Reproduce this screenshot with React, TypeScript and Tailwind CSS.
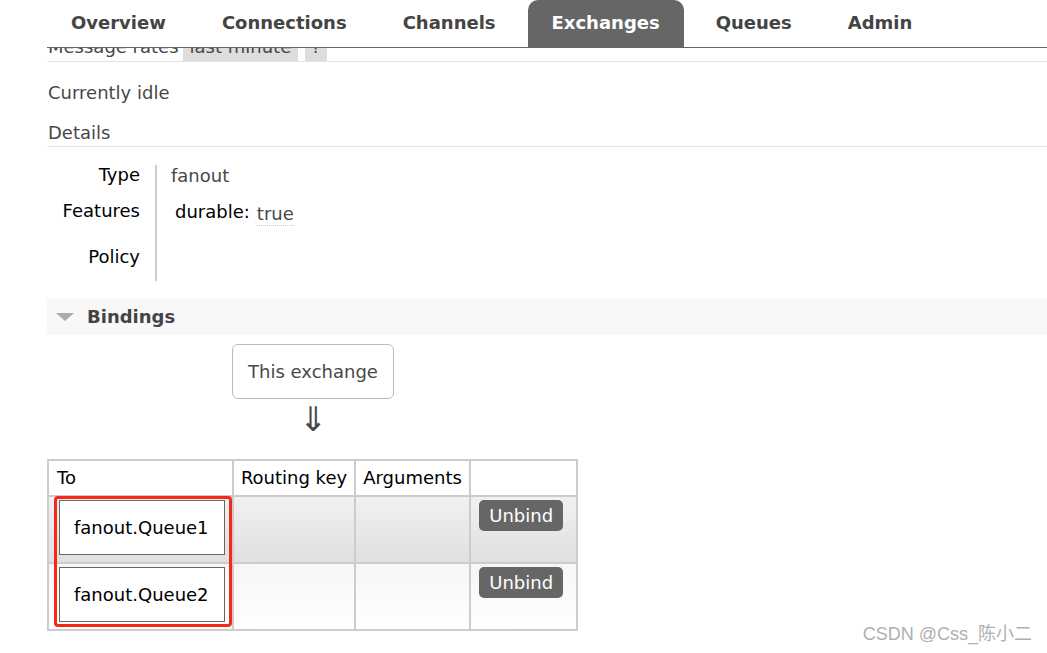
import React from "react";

const font = { fontFamily: '"DejaVu Sans", Verdana, sans-serif' };

export default function App() {
  const tabs = ["Overview", "Connections", "Channels", "Exchanges", "Queues", "Admin"];
  return (
    <div className="w-[1047px] h-[653px] bg-white overflow-hidden relative text-[#484848] text-[18px] leading-[22px]" style={font}>
      {/* nav */}
      <div className="relative z-10 bg-white h-[48px] ml-[47px] border-b border-[#666] flex items-end">
        <div className="flex h-[47px] gap-[8px]">
          {tabs.map((t) => (
            <div
              key={t}
              className={
                "h-[47px] px-[24px] flex items-center pb-[1px] text-[18px] font-bold " +
                (t === "Exchanges" ? "bg-[#666] text-white rounded-t-[10px]" : "text-[#444]")
              }
            >
              {t}
            </div>
          ))}
        </div>
      </div>

      {/* message rates row, scrolled under nav */}
      <div className="ml-[47px] -mt-[14px] h-[28px] border-b border-[#e4e4e4] flex items-start gap-[4px] text-[#484848]">
        <span className="pt-[2px] pl-[1px]">Message rates</span>
        <span className="bg-[#ddd] px-[7px] pt-[2px] h-[27px]">last minute</span>
        <span className="bg-[#ddd] px-[6px] pt-[2px] h-[27px] ml-[3px]">?</span>
      </div>

      <div className="ml-[48px] mt-[20px]">Currently idle</div>
      <div className="ml-[47px] mt-[18px] pl-[1px] pb-[2px] border-b border-[#e4e4e4]">Details</div>

      {/* details table */}
      <div className="ml-[47px] mt-[18px] flex">
        <div className="w-[93px] -mt-[1px] text-right text-black flex flex-col">
          <div className="h-[36px]">Type</div>
          <div className="h-[46px]">Features</div>
          <div className="h-[35px]">Policy</div>
        </div>
        <div className="w-[2px] h-[116px] bg-[#ccc] ml-[15px]" />
        <div className="ml-[14px] flex flex-col">
          <div className="h-[36px]">fanout</div>
          <div className="flex items-start ml-[4px]">
            <span className="text-black">durable:</span>
            <span className="ml-[7px] mt-[2px] border-b border-dotted border-[#ccc]">true</span>
          </div>
        </div>
      </div>

      {/* bindings header */}
      <div className="ml-[47px] mt-[18px] h-[36px] bg-[#f8f8f8] flex items-center">
        <svg width="18" height="8" viewBox="0 0 18 8" className="ml-[9px]">
          <polygon points="0,0 18,0 9,8" fill="#aaa" />
        </svg>
        <span className="ml-[13px] font-bold text-[#444]">Bindings</span>
      </div>

      <div className="ml-[232px] mt-[9px] w-[162px] h-[55px] border border-[#bbb] rounded-[6px] flex items-center justify-center">
        This exchange
      </div>
      <div className="ml-[232px] w-[162px] h-[60px] text-center text-[34px] leading-[40px] text-[#484848]">⇓</div>

      {/* bindings table */}
      <div className="ml-[47px] w-[531px] relative">
        <table className="border-collapse text-black">
          <thead>
            <tr className="h-[36px]">
              <th className="border-2 border-[#ccc] w-[185px] text-left font-normal px-[8px]">To</th>
              <th className="border-2 border-[#ccc] w-[123px] text-left font-normal px-[7px]">Routing key</th>
              <th className="border-2 border-[#ccc] w-[115px] text-left font-normal px-[7px]">Arguments</th>
              <th className="border-2 border-[#ccc] w-[107px]"></th>
            </tr>
          </thead>
          <tbody>
            {["fanout.Queue1", "fanout.Queue2"].map((q, i) => (
              <tr
                key={q}
                className={
                  "h-[67px] " +
                  (i === 0
                    ? "bg-gradient-to-b from-[#f1f1f1] to-[#e0e0e0]"
                    : "bg-gradient-to-b from-[#f6f6f6] to-[#ffffff]")
                }
              >
                <td className="border-2 border-[#ccc] p-0 align-top">
                  <div className="ml-[10px] mt-[3px] w-[166px] h-[55px] bg-white border border-[#666] flex items-center pl-[14px]">
                    {q}
                  </div>
                </td>
                <td className="border-2 border-[#ccc]"></td>
                <td className="border-2 border-[#ccc]"></td>
                <td className="border-2 border-[#ccc] align-top p-0">
                  <div className="ml-[8px] mt-[3px] w-[84px] h-[31px] bg-[#666] rounded-[5px] text-white flex items-center justify-center">
                    Unbind
                  </div>
                </td>
              </tr>
            ))}
          </tbody>
        </table>
        <div className="absolute left-[7px] top-[37px] w-[178px] h-[131px] border-[3px] border-[#f5281c] rounded-[4px] pointer-events-none" />
      </div>

      <div
        className="absolute right-[15px] bottom-[8px] text-[18px] text-[#b0b0b0]"
        style={{ fontFamily: '"Liberation Sans", "Noto Sans CJK SC", sans-serif' }}
      >
        CSDN @Css_陈小二
      </div>
    </div>
  );
}
